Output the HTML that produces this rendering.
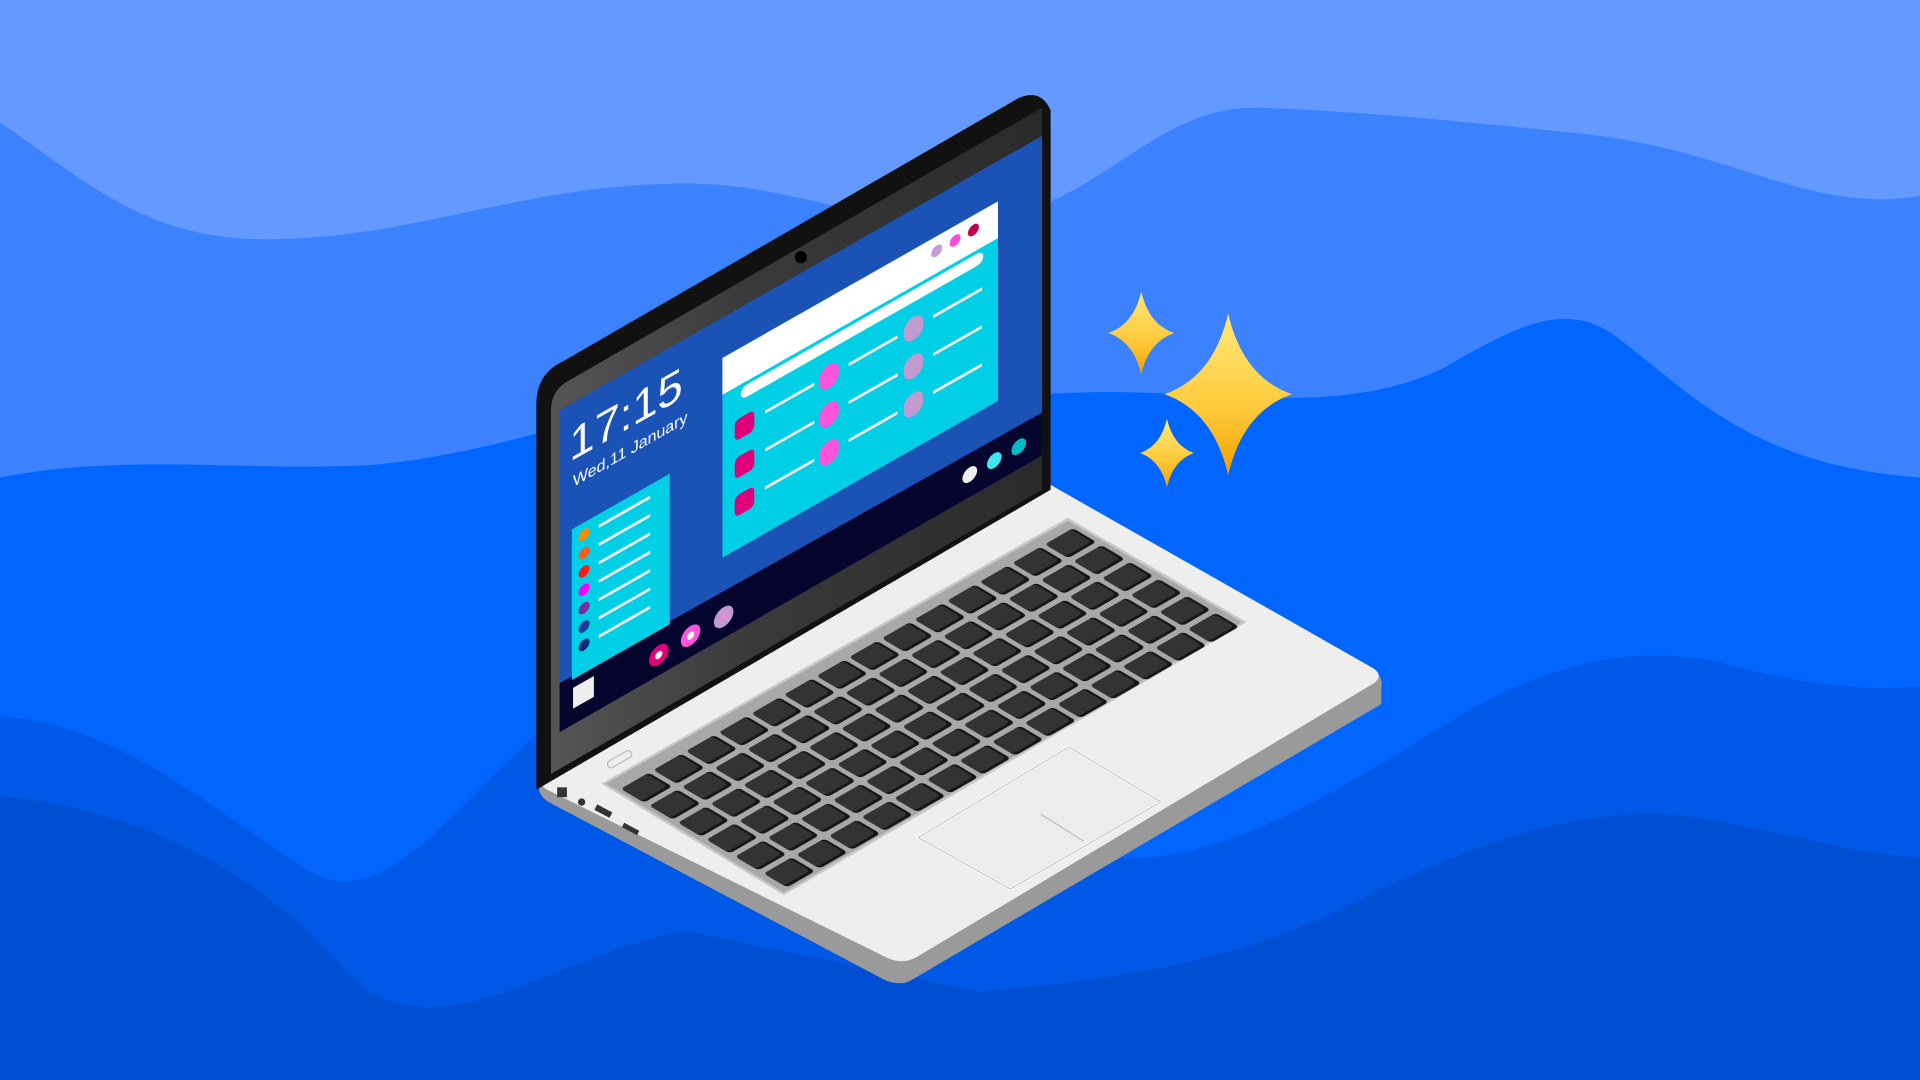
<!DOCTYPE html><html><head><style>html,body{margin:0;padding:0;width:1920px;height:1080px;overflow:hidden;background:#6499ff}svg{display:block}</style></head><body>
<svg width="1920" height="1080" viewBox="0 0 1568 882" xmlns="http://www.w3.org/2000/svg" font-family="Liberation Sans, sans-serif">
<defs>
<linearGradient id="gold" x1="0" y1="0" x2="0" y2="1"><stop offset="0" stop-color="#ffe97a"/><stop offset="0.6" stop-color="#ffc93a"/><stop offset="1" stop-color="#f0a000"/></linearGradient>
<linearGradient id="bez" x1="0" y1="0" x2="1" y2="0"><stop offset="0" stop-color="#555"/><stop offset="0.4" stop-color="#3a3a3a"/><stop offset="1" stop-color="#2a2a2a"/></linearGradient>
<pattern id="keys" patternUnits="userSpaceOnUse" width="21.43" height="16.67"><rect x="1.5" y="1.5" width="18.4" height="13.6" rx="2" fill="#151515"/><rect x="1.5" y="1.5" width="17" height="12" rx="2" fill="#333"/></pattern>
</defs>
<rect width="1568" height="882" fill="#6499ff"/>
<path d="M0 100 C60 140 110 190 200 195 C330 200 420 150 560 150 C650 150 700 185 800 180 C900 170 940 85 1030 88 C1130 92 1200 100 1300 110 C1420 125 1480 175 1568 160 L1568 882 L0 882Z" fill="#3c82ff"/>
<path d="M0 390 C100 370 200 385 300 380 C420 370 480 330 600 330 L900 320 C1000 320 1100 340 1180 300 C1240 265 1280 245 1320 275 C1380 320 1430 380 1568 390 L1568 882 L0 882Z" fill="#0066ff"/>
<path d="M0 585 C90 590 160 650 250 710 C330 760 400 600 500 560 L900 700 C1000 710 1100 640 1200 580 C1280 535 1350 525 1420 545 C1480 560 1530 565 1568 560 L1568 882 L0 882Z" fill="#0058e6"/>
<path d="M0 650 C100 660 200 700 280 790 C350 870 450 780 560 760 L800 810 C900 800 1000 790 1100 740 C1200 690 1300 650 1400 670 C1480 685 1530 700 1568 700 L1568 882 L0 882Z" fill="#004fd2"/>
<path d="M440 642 L858 398 L1122 548 Q1130 553 1128 562 L1128 575 L745 800 Q735 806 722 800 L448 655 Q440 650 440 642Z" fill="#9a9a9a"/>
<path d="M440 638 L858 396 L1122 546 Q1130 552 1122 558 L748 782 Q736 788 724 782 L445 644Z" fill="#eeeeee"/>
<path d="M493 640 L872 424 L1016 508 L640 730Z" fill="#a8a8a8" stroke="#c8c8c8" stroke-width="2"/>
<g transform="matrix(1.2433,-0.7167,1.4,0.83,503,644)"><rect x="0" y="0" width="300" height="100" fill="url(#keys)"/></g>
<path d="M750 684 L873 610 L948 655 L825 726Z" fill="#ececec" stroke="#ffffff" stroke-width="2"/>
<path d="M750 684 L873 610 L948 655 L825 726Z" fill="none" stroke="#bdbdbd" stroke-width="0.8"/>
<path d="M850 665 L885 687" stroke="#bbb" stroke-width="1"/>
<rect x="495" y="617" width="22" height="6" rx="3" fill="none" stroke="#bbb" transform="rotate(-30 506 620)"/>
<g fill="#333"><rect x="455" y="643" width="8" height="8"/><circle cx="475" cy="655" r="3"/><rect x="486" y="660" width="14" height="5" transform="rotate(28 493 662)"/><rect x="508" y="675" width="14" height="4" transform="rotate(28 515 677)"/></g>
<path d="M438 330 Q438 305 460 295 L832 80 Q850 72 858 90 L858 400 L438 645Z" fill="#111"/>
<path d="M450 335 Q450 318 466 310 L851 88 L851 400 L450 632Z" fill="url(#bez)"/>
<circle cx="654" cy="210" r="5" fill="#000"/>
<path d="M457 335 L851 111 L851 372 L457 598Z" fill="#1a52b5"/>
<path d="M457 558 L851 337 L851 372 L457 598Z" fill="#05052e"/>
<g transform="matrix(1,-0.5685,0,1,457,335)">
<text x="8" y="47" font-size="37" fill="#fff">17:15</text>
<text x="11" y="69" font-size="13" fill="#fff">Wed,11 January</text>
<rect x="10" y="103" width="80" height="123" fill="#00cfe6"/>
<g fill="none" stroke="#fff" stroke-width="2.5"><path d="M32 113h42M32 128h42M32 143h42M32 158h42M32 173h42M32 188h42M32 203h42"/></g>
<circle cx="20" cy="113" r="4.5" fill="#ff8c00"/><circle cx="20" cy="128" r="4.5" fill="#ff5a1e"/><circle cx="20" cy="143" r="4.5" fill="#ff1a1a"/><circle cx="20" cy="158" r="4.5" fill="#ff00ff"/><circle cx="20" cy="173" r="4.5" fill="#7a2ea0"/><circle cx="20" cy="188" r="4.5" fill="#1a3f9a"/><circle cx="20" cy="203" r="4.5" fill="#0b2a7a"/>
<rect x="133" y="33" width="225" height="163" fill="#00cfe6"/>
<rect x="133" y="33" width="225" height="30" fill="#fff"/>
<circle cx="308" cy="45" r="4.5" fill="#c79bd8"/><circle cx="323" cy="45" r="4.5" fill="#ff4fd8"/><circle cx="338" cy="45" r="4.5" fill="#c0004f"/>
<rect x="148" y="66" width="198" height="10" rx="5" fill="#fff"/>
<g fill="none" stroke="#fff" stroke-width="2.5"><path d="M168 97h40M168 128h40M168 159h40M236 97h40M236 128h40M236 159h40M305 97h40M305 128h40M305 159h40"/></g>
<rect x="143" y="90" width="16" height="17" rx="4" fill="#e0007a"/><rect x="143" y="121" width="16" height="17" rx="4" fill="#e0007a"/><rect x="143" y="152" width="16" height="17" rx="4" fill="#e0007a"/>
<rect x="212" y="88" width="16" height="19" rx="8" fill="#ff55dd"/><rect x="212" y="119" width="16" height="19" rx="8" fill="#ff55dd"/><rect x="212" y="150" width="16" height="19" rx="8" fill="#ff55dd"/>
<rect x="281" y="88" width="16" height="19" rx="8" fill="#c29ad2"/><rect x="281" y="119" width="16" height="19" rx="8" fill="#c29ad2"/><rect x="281" y="150" width="16" height="19" rx="8" fill="#c29ad2"/>
<rect x="11" y="233" width="17" height="17" fill="#eee"/>
<circle cx="81" cy="246" r="8" fill="#e0007a"/><circle cx="81" cy="246" r="3" fill="#fff"/>
<circle cx="107" cy="245" r="8" fill="#ff55dd"/><circle cx="107" cy="245" r="3" fill="#fff"/>
<circle cx="134" cy="245" r="8" fill="#c29ad2"/><circle cx="134" cy="245" r="3" fill="#e58ad8"/>
<circle cx="335" cy="243" r="6" fill="#eee"/><circle cx="355" cy="243" r="6" fill="#3ee6f0"/><circle cx="375" cy="243" r="6" fill="#00bcc8"/>
</g>
<g fill="url(#gold)">
<path transform="translate(1003,322)" d="M0 -66 Q12 -14 52 0 Q12 14 0 66 Q-12 14 -52 0 Q-12 -14 0 -66Z"/>
<path transform="translate(932,272)" d="M0 -34 Q6 -7 27 0 Q6 7 0 34 Q-6 7 -27 0 Q-6 -7 0 -34Z"/>
<path transform="translate(953,370)" d="M0 -28 Q5 -6 22 0 Q5 6 0 28 Q-5 6 -22 0 Q-5 -6 0 -28Z"/>
</g>
</svg>
</body></html>
